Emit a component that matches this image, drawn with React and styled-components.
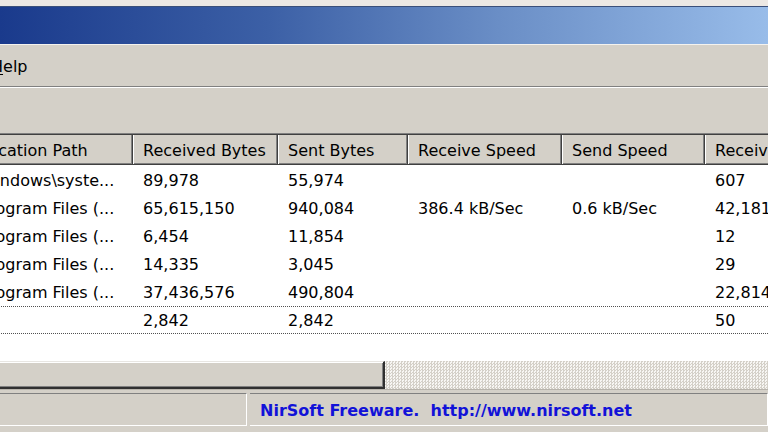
import React from 'react';
import styled, { createGlobalStyle } from 'styled-components';

const GlobalStyle = createGlobalStyle`
  html, body {
    margin: 0;
    padding: 0;
    overflow: hidden;
    background: #d4d0c8;
  }
  body {
    font-family: "DejaVu Sans", "Liberation Sans", sans-serif;
    font-size: 16px;
    color: #000;
  }
`;

const columns = [
  { title: 'Application Path', width: 185 },
  { title: 'Received Bytes', width: 145 },
  { title: 'Sent Bytes', width: 130 },
  { title: 'Receive Speed', width: 154 },
  { title: 'Send Speed', width: 143 },
  { title: 'Received Packets', width: 170 },
];

const rows = [
  ['C:\\Windows\\syste...', '89,978', '55,974', '', '', '607'],
  ['C:\\Program Files (...', '65,615,150', '940,084', '386.4 kB/Sec', '0.6 kB/Sec', '42,181'],
  ['C:\\Program Files (...', '6,454', '11,854', '', '', '12'],
  ['C:\\Program Files (...', '14,335', '3,045', '', '', '29'],
  ['C:\\Program Files (...', '37,436,576', '490,804', '', '', '22,814'],
  ['', '2,842', '2,842', '', '', '50'],
];

const Window = styled.div`
  display: flex;
  flex-direction: column;
  width: 768px;
  height: 432px;
  overflow: hidden;
`;

const TopStrip = styled.div`
  height: 6px;
  background: #ece8e4;
`;

const TitleBar = styled.div`
  height: 37px;
  border-top: 1px solid #3a4f7a;
  background: linear-gradient(90deg, #1a3a8c 0%, #3c60a6 35%, #6a8ec6 65%, #98bce9 100%);
`;

const MenuBar = styled.div`
  display: flex;
  align-items: center;
  height: 40px;
  border-top: 1px solid #f4f2ee;
  padding-bottom: 1px;
`;

const MenuItem = styled.span`
  margin-left: -9px;
  padding-top: 2px;

  u {
    text-decoration-thickness: 1px;
    text-underline-offset: 2px;
  }
`;

const Etched = styled.div`
  height: 1px;
  background: #808080;
  border-bottom: 1px solid #ffffff;
`;

const Toolbar = styled.div`
  height: 45px;
`;

const ListView = styled.div`
  height: 227px;
  background: #ffffff;
  border-top: 1px solid #808080;
  box-shadow: inset 0 1px #404040;
  overflow: hidden;
`;

const Table = styled.div`
  margin-left: -52px;
  padding-top: 1px;
`;

const HeaderRow = styled.div`
  display: flex;
  height: 29px;
  margin-bottom: 1px;
  background: #d4d0c8;
  border-bottom: 1px solid #404040;
  box-shadow: inset 0 -1px #808080;
`;

const HeaderCell = styled.div`
  flex: 0 0 ${p => p.$width}px;
  box-sizing: border-box;
  display: flex;
  align-items: center;
  padding-left: 10px;
  padding-top: 1px;
  border-right: 1px solid #404040;
  box-shadow: inset -1px 0 #808080, inset 1px 0 #ffffff, inset 0 -1px #808080;
  white-space: nowrap;
  overflow: hidden;
`;

const Row = styled.div`
  display: flex;
  height: 28px;
  box-sizing: border-box;
  border-top: 1px dotted ${p => (p.$focused ? '#505050' : 'transparent')};
  border-bottom: 1px dotted ${p => (p.$focused ? '#505050' : 'transparent')};
`;

const Cell = styled.div`
  flex: 0 0 ${p => p.$width}px;
  box-sizing: border-box;
  display: flex;
  align-items: center;
  padding-left: 10px;
  white-space: nowrap;
  overflow: hidden;
`;

const ScrollBar = styled.div`
  display: flex;
  height: 28px;
`;

const Thumb = styled.div`
  flex: 0 0 385px;
  box-sizing: border-box;
  background: #d4d0c8;
  border-top: 1px solid #e8e6e2;
  border-right: 2px solid #303030;
  border-bottom: 2px solid #303030;
  box-shadow: inset 0 1px #ffffff, inset -1px -1px #808080;
`;

const Track = styled.div`
  flex: 1;
  background-color: #ece9e4;
  background-image: repeating-conic-gradient(#d4d0c8 0 25%, #f7f6f3 0 50%);
  background-size: 3px 3px;
`;

const StatusBar = styled.div`
  display: flex;
  gap: 3px;
  height: 42px;
  box-sizing: border-box;
  padding: 3px 0 5px;
  border-top: 1px solid #b8b4ac;
`;

const StatusPanel = styled.div`
  flex: ${p => (p.$grow ? '1' : '0 0 247px')};
  box-sizing: border-box;
  display: flex;
  align-items: center;
  padding-left: 10px;
  padding-top: 2px;
  border-top: 1px solid #808080;
  border-bottom: 1px solid #ffffff;
  border-right: 1px solid #ffffff;
  color: #1212d8;
  font-weight: bold;
  white-space: nowrap;
`;

export default function App() {
  return (
    <>
      <GlobalStyle />
      <Window>
        <TopStrip />
        <TitleBar />
        <MenuBar>
          <MenuItem>
            <u>H</u>elp
          </MenuItem>
        </MenuBar>
        <Etched />
        <Toolbar />
        <ListView>
          <Table>
            <HeaderRow>
              {columns.map(c => (
                <HeaderCell key={c.title} $width={c.width}>
                  {c.title}
                </HeaderCell>
              ))}
            </HeaderRow>
            {rows.map((r, i) => (
              <Row key={i} $focused={i === rows.length - 1}>
                {r.map((v, j) => (
                  <Cell key={j} $width={columns[j].width}>
                    {v}
                  </Cell>
                ))}
              </Row>
            ))}
          </Table>
        </ListView>
        <ScrollBar>
          <Thumb />
          <Track />
        </ScrollBar>
        <StatusBar>
          <StatusPanel />
          <StatusPanel $grow>NirSoft Freeware.&nbsp; http://www.nirsoft.net</StatusPanel>
        </StatusBar>
      </Window>
    </>
  );
}
